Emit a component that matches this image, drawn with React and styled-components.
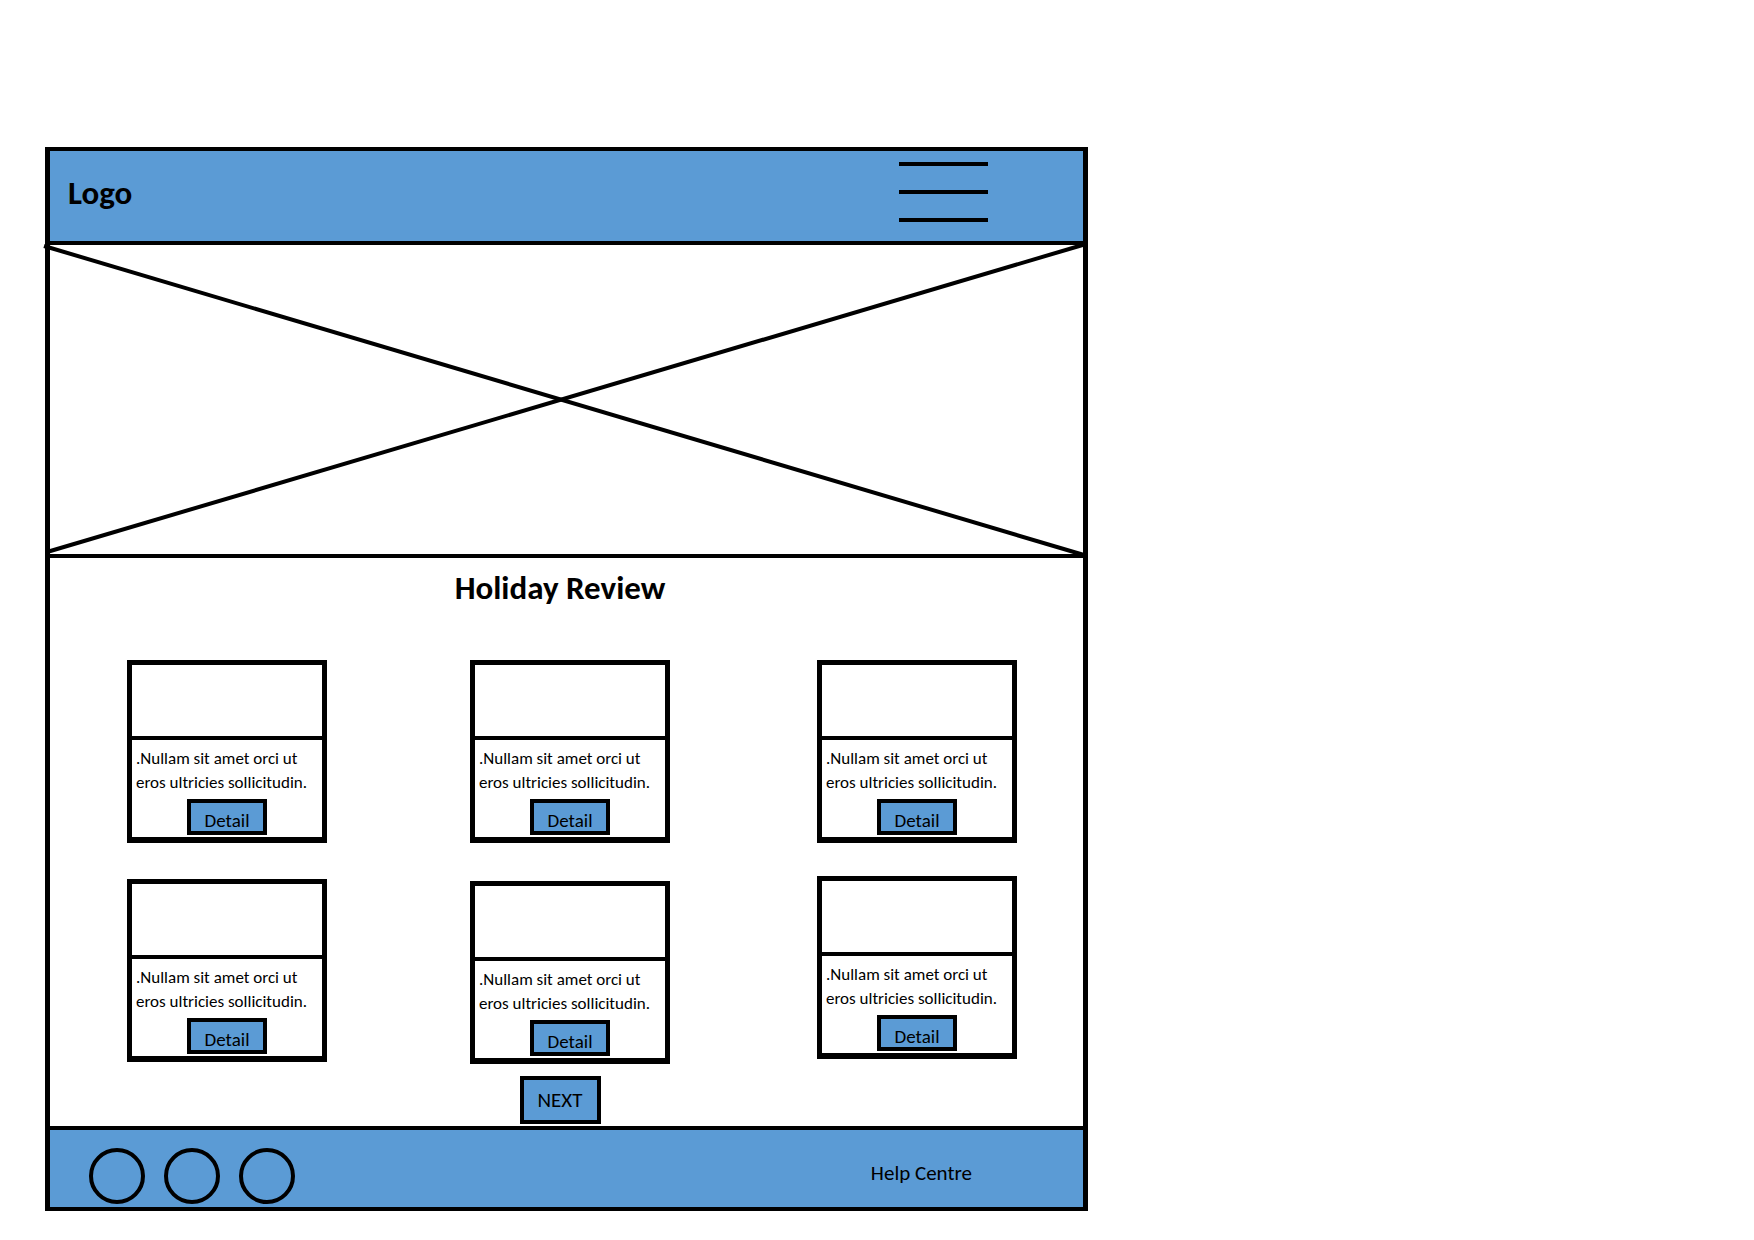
import React from "react";
import styled, { createGlobalStyle } from "styled-components";

const BLUE = "#5b9bd5";
const INK = "#000";

const GlobalStyle = createGlobalStyle`
  *, *::before, *::after { box-sizing: border-box; }
  body {
    margin: 0;
    background: #fff;
    color: ${INK};
    font-family: Carlito, Lato, sans-serif;
  }
  h1, p { margin: 0; }
  button { font: inherit; color: inherit; cursor: pointer; }
`;

const Page = styled.div`
  padding: 147px 45px 24px;
`;

const Frame = styled.div`
  max-width: 1043px;
  border: 4px solid ${INK};
  border-width: 4px 5px;
`;

const Header = styled.header`
  display: flex;
  align-items: center;
  justify-content: space-between;
  height: 94px;
  padding: 0 95px 0 18px;
  background: ${BLUE};
  border-bottom: 4px solid ${INK};
`;

const Logo = styled.a`
  padding-bottom: 6px;
  color: inherit;
  font-size: 33px;
  font-weight: 700;
  line-height: 40px;
  text-decoration: none;
`;

const MenuButton = styled.button`
  display: flex;
  flex-direction: column;
  gap: 24px;
  width: 89px;
  padding: 0 0 8px;
  border: 0;
  background: none;
`;

const MenuBar = styled.span`
  height: 4px;
  background: ${INK};
`;

const Hero = styled.section`
  height: 313px;
  border-bottom: 4px solid ${INK};
`;

const HeroCross = styled.svg`
  display: block;
  width: 100%;
  height: 100%;
  overflow: visible;
`;

const Reviews = styled.main`
  display: flex;
  flex-direction: column;
  align-items: center;
  padding: 10px 66px 2px 53px;
`;

const Title = styled.h1`
  font-size: 33px;
  line-height: 40px;
`;

const Cards = styled.div`
  display: grid;
  grid-template-columns: 343fr 347fr 200px;
  align-self: stretch;
  margin-top: 52px;
  padding-left: 24px;
`;

const CardColumn = styled.div`
  display: flex;
  flex-direction: column;
  gap: ${({ $gap }) => $gap}px;
`;

const Card = styled.article`
  display: flex;
  flex-direction: column;
  width: 200px;
  border: 5px solid ${INK};
  border-bottom-width: 6px;
`;

const CardImage = styled.div`
  height: 75px;
  border-bottom: 4px solid ${INK};
`;

const CardBody = styled.div`
  display: flex;
  flex-direction: column;
  align-items: center;
  padding: 7px 0 2px 4px;
`;

const CardText = styled.p`
  align-self: stretch;
  font-size: 17px;
  line-height: 24px;
  white-space: nowrap;
`;

const Button = styled.button`
  border: 4px solid ${INK};
  background: ${BLUE};
  line-height: 24px;
`;

const DetailButton = styled(Button)`
  width: 80px;
  height: 36px;
  margin: 4px 4px 0 0;
  padding: 8px 0 0;
  font-size: 19px;
  line-height: 20px;
`;

const NextButton = styled(Button)`
  width: 81px;
  height: 48px;
  margin-top: 12px;
  padding: 0;
  font-size: 21px;
`;

const Footer = styled.footer`
  display: flex;
  align-items: center;
  justify-content: space-between;
  height: 81px;
  padding: 0 111px 0 39px;
  border-top: 4px solid ${INK};
  background: ${BLUE};
`;

const Socials = styled.nav`
  display: flex;
  gap: 19px;
  padding-top: 14px;
`;

const SocialLink = styled.a`
  width: 56px;
  height: 56px;
  border: 4px solid ${INK};
  border-radius: 50%;
`;

const HelpLink = styled.a`
  padding-top: 8px;
  color: inherit;
  font-size: 21px;
  line-height: 24px;
  text-decoration: none;
`;

const columns = [
  { id: "left", gap: 36 },
  { id: "middle", gap: 38 },
  { id: "right", gap: 33 },
];

function ReviewCard() {
  return (
    <Card>
      <CardImage />
      <CardBody>
        <CardText>
          .Nullam sit amet orci ut
          <br />
          eros ultricies sollicitudin.
        </CardText>
        <DetailButton type="button">Detail</DetailButton>
      </CardBody>
    </Card>
  );
}

export default function App() {
  return (
    <>
      <GlobalStyle />
      <Page>
        <Frame>
          <Header>
            <Logo href="#">Logo</Logo>
            <MenuButton type="button" aria-label="Menu">
              <MenuBar />
              <MenuBar />
              <MenuBar />
            </MenuButton>
          </Header>
          <Hero>
            <HeroCross viewBox="0 0 1033 309" preserveAspectRatio="none" aria-hidden="true">
              <g stroke={INK} strokeWidth="4">
                <line x1="-6" y1="1" x2="1034" y2="310" />
                <line x1="-3" y1="307" x2="1036" y2="-1" />
              </g>
            </HeroCross>
          </Hero>
          <Reviews>
            <Title>Holiday Review</Title>
            <Cards>
              {columns.map(({ id, gap }) => (
                <CardColumn key={id} $gap={gap}>
                  <ReviewCard />
                  <ReviewCard />
                </CardColumn>
              ))}
            </Cards>
            <NextButton type="button">NEXT</NextButton>
          </Reviews>
          <Footer>
            <Socials aria-label="Social media">
              <SocialLink href="#" aria-label="First social link" />
              <SocialLink href="#" aria-label="Second social link" />
              <SocialLink href="#" aria-label="Third social link" />
            </Socials>
            <HelpLink href="#">Help Centre</HelpLink>
          </Footer>
        </Frame>
      </Page>
    </>
  );
}
